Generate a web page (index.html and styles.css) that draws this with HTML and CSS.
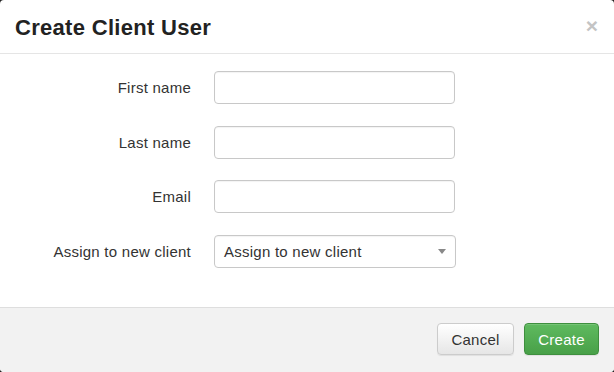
FILE: index.html
```html
<!DOCTYPE html>
<html>
<head>
<meta charset="utf-8">
<link rel="stylesheet" href="styles.css">
</head>
<body>
<div class="modal">
  <div class="modal-header">
    <h4 class="modal-title">Create Client User</h4>
    <span class="close">&times;</span>
  </div>
  <div class="modal-body">
    <div class="form-row">
      <label class="form-label">First name</label>
      <input class="form-control" type="text">
    </div>
    <div class="form-row">
      <label class="form-label">Last name</label>
      <input class="form-control" type="text">
    </div>
    <div class="form-row">
      <label class="form-label">Email</label>
      <input class="form-control" type="text">
    </div>
    <div class="form-row">
      <label class="form-label">Assign to new client</label>
      <div class="form-control select">
        <span>Assign to new client</span>
        <svg class="caret" width="8" height="5" viewBox="0 0 8 5"><path d="M0 0H8L4 5Z" fill="#888"/></svg>
      </div>
    </div>
  </div>
  <div class="modal-footer">
    <button class="btn btn-default">Cancel</button>
    <button class="btn btn-success">Create</button>
  </div>
</div>
</body>
</html>
```

FILE: styles.css
```css
* { box-sizing: border-box; }
html, body { margin: 0; padding: 0; }
body {
  background: #222;
  font-family: "Liberation Sans", Arial, sans-serif;
  color: #333;
  font-size: 15px;
  width: 614px;
  height: 372px;
  overflow: hidden;
}
.modal {
  width: 614px;
  height: 372px;
  background: #fff;
  border-radius: 4px;
  overflow: hidden;
  display: flex;
  flex-direction: column;
}
.modal-header {
  height: 54px;
  border-bottom: 1px solid #e5e5e5;
  display: flex;
  align-items: center;
  justify-content: space-between;
  padding: 0 16px 0 15px;
}
.modal-title {
  margin: 0;
  font-size: 22px;
  letter-spacing: 0.3px;
  font-weight: bold;
  color: #222;
  padding-top: 3px;
}
.close {
  font-size: 21px;
  font-weight: bold;
  color: #c4c4c4;
  line-height: 1;
  padding-bottom: 2px;
}
.modal-body {
  flex: 1;
  padding: 17px 0 0 0;
  display: flex;
  flex-direction: column;
  gap: 21.67px;
}
.form-row {
  display: flex;
  align-items: center;
  height: 33px;
}
.form-label {
  width: 192px;
  text-align: right;
  padding-right: 1px;
  font-size: 15px;
  letter-spacing: 0.25px;
  color: #333;
}
.form-control {
  margin-left: 22px;
  width: 241px;
  height: 33px;
  border: 1px solid #c8c8c8;
  border-radius: 4px;
  background: #fff;
  font-family: inherit;
  font-size: 15px;
  letter-spacing: 0.25px;
  padding: 6px 9px;
  box-shadow: inset 0 1px 1px rgba(0,0,0,0.05);
}
.select {
  width: 242px;
  display: flex;
  align-items: center;
  justify-content: space-between;
  color: #333;
  padding-right: 9px;
}
.modal-footer {
  height: 65px;
  border-top: 1px solid #dedede;
  background: #f2f2f2;
  display: flex;
  justify-content: flex-end;
  align-items: flex-start;
  padding: 15px 15px 0 0;
  gap: 10px;
}
.btn {
  height: 32px;
  border-radius: 4px;
  font-family: inherit;
  font-size: 15px;
  letter-spacing: 0.25px;
  padding: 0;
}
.btn-default {
  width: 77px;
  color: #333;
  border: 1px solid #ccc;
  background: linear-gradient(#ffffff, #e6e6e6);
  box-shadow: inset 0 1px 0 rgba(255,255,255,0.15), 0 1px 1px rgba(0,0,0,0.075);
}
.btn-success {
  width: 75px;
  color: #fff;
  border: 1px solid #3e8f3e;
  background: linear-gradient(#5fba5f, #48a048);
  box-shadow: inset 0 1px 0 rgba(255,255,255,0.15), 0 1px 1px rgba(0,0,0,0.075);
}
```
